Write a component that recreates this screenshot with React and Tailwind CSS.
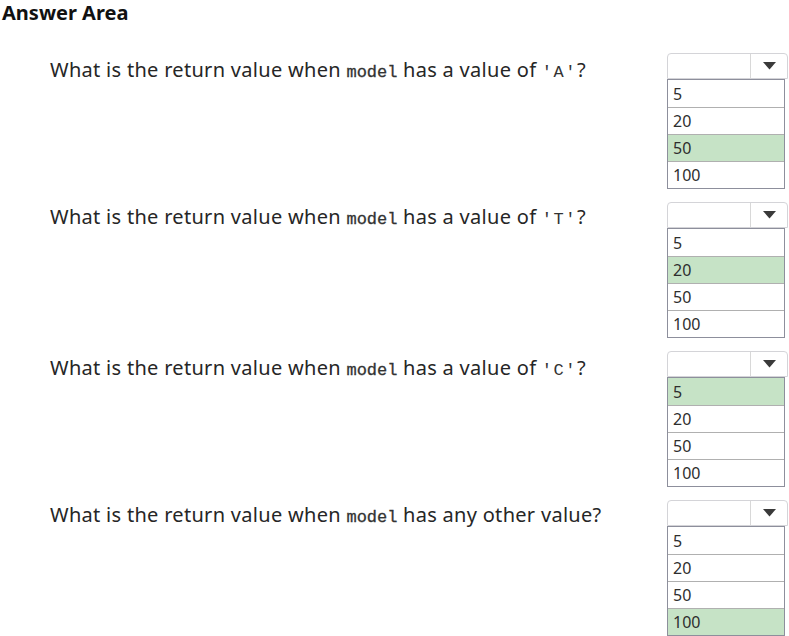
import React from "react";

const questions = [
  { pre: "What is the return value when ", post: " has a value of ", val: "'A'", end: "?", pick: "50", top: "pt-[2px]" },
  { pre: "What is the return value when ", post: " has a value of ", val: "'T'", end: "?", pick: "20", top: "pt-0" },
  { pre: "What is the return value when ", post: " has a value of ", val: "'C'", end: "?", pick: "5", top: "pt-[2px]" },
  { pre: "What is the return value when ", post: " has any other value?", val: null, end: "", pick: "100", top: "pt-0" },
];

const options = ["5", "20", "50", "100"];

const Dropdown = ({ pick }) => {
  return (
    <div className="w-[121px]">
      <div className="flex h-[26px] w-[121px] rounded-t-[4px] border border-[#d4d4d8] bg-white">
        <div className="flex-1" />
        <div className="flex w-[37px] items-center justify-center border-l border-[#d8d8d8]">
          <svg width="13" height="8" viewBox="0 0 13 8">
            <path d="M0 0 L13 0 L6.5 7.5 Z" fill="#3a3a3a" />
          </svg>
        </div>
      </div>
      <div className="w-[118px] border border-[#8d8f9c] bg-white">
        {options.map((o, i) => (
          <div
            key={o}
            className={`flex h-[27px] items-center pl-[5px] text-[16px] text-[#2e2e2e] ${
              i > 0 ? "border-t border-[#b0b0b0]" : ""
            } ${o === pick ? "bg-[#c6e3c6]" : ""}`}
          >
            {o}
          </div>
        ))}
      </div>
    </div>
  );
};

const App = () => {
  return (
    <div className="h-[636px] w-[789px] overflow-hidden bg-white font-['Noto_Sans',sans-serif] text-[#222]">
      <div className="pl-[2px] pt-[1px] text-[20px] font-bold leading-[23px] text-[#111]">Answer Area</div>
      <div className="mt-[29px] flex flex-col gap-[13px]">
        {questions.map((q, i) => (
          <div key={i} className="flex h-[136px] items-start justify-between">
            <div className={`pl-[50px] ${q.top} text-[20px] leading-[30px] tracking-[0.3px] text-[#262626]`}>
              {q.pre}
              <span className="font-['Liberation_Mono',monospace] text-[17px] tracking-normal text-[#333] [-webkit-text-stroke:0.3px_#333]">model</span>
              {q.post}
              {q.val && (
                <span className="font-['Liberation_Mono',monospace] text-[17px] tracking-[1.5px] text-[#333]">{q.val}</span>
              )}
              {q.end}
            </div>
            <div className="mr-[1px]">
              <Dropdown pick={q.pick} />
            </div>
          </div>
        ))}
      </div>
    </div>
  );
};

export default App;
